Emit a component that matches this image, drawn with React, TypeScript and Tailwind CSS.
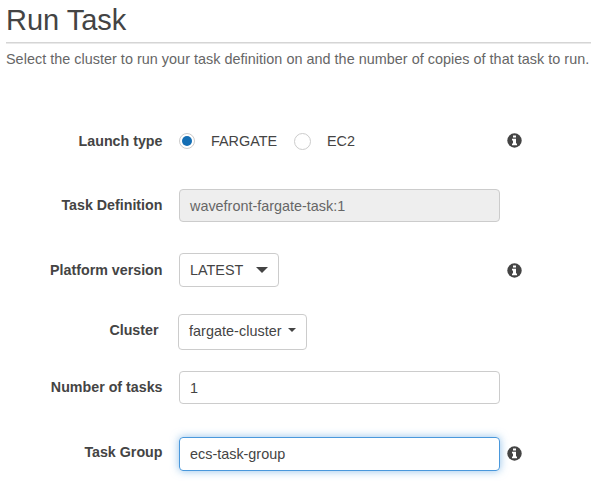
import type { ReactNode } from "react";

type RowProps = { label: string; className: string; labelClass?: string; infoClass?: string; info?: boolean; children: ReactNode };

function InfoIcon({ className }: { className: string }) {
  return (
    <svg viewBox="0 0 15 15" className={`ml-[7px] size-[15px] ${className}`} aria-hidden="true">
      <circle cx="7.5" cy="7.5" r="7.2" fill="#444" />
      <path d="M6 2.4h3v2.2H6zM5 5.8h4v4.8h1v1.7H5v-1.7h1V7.4H5z" fill="#fff" />
    </svg>
  );
}

function Row({ label, className, labelClass = "", infoClass = "", info, children }: RowProps) {
  return (
    <div className={`flex items-center ${className}`}>
      <div className={`w-[162.5px] shrink-0 text-right text-[14.25px] leading-[18px] font-bold whitespace-nowrap ${labelClass}`}>
        {label}
      </div>
      <div className="ml-[16.5px] flex h-full w-[321px] items-center">{children}</div>
      {info && <InfoIcon className={infoClass} />}
    </div>
  );
}

function Radio({ checked }: { checked?: boolean }) {
  return (
    <span className={`flex shrink-0 items-center justify-center rounded-full border border-[#ccc] bg-white ${checked ? "size-[16px]" : "size-[17px]"}`}>
      {checked && <span className="size-[10px] rounded-full bg-[#146eb4]" />}
    </span>
  );
}

const field = "flex h-full items-center rounded-[4px] border px-[10px] text-[14.4px] whitespace-nowrap";

export default function App() {
  return (
    <main className="h-[481px] w-[591px] overflow-hidden bg-white font-['Liberation_Sans',Arial,sans-serif] text-[#444]">
      <header className="pl-[6px]">
        <h1 className="h-[42px] pt-[3px] text-[29px] leading-[34px]">Run Task</h1>
        <div className="h-[2px] border-t border-[#d5d5d5] bg-[#e9e9e9]" />
        <p className="mt-[6px] text-[14.4px] leading-[18px] tracking-[0.026px] whitespace-nowrap text-[#666]">
          Select the cluster to run your task definition on and the number of copies of that task to run.
        </p>
      </header>
      <form className="pt-[64px]">
        <Row label="Launch type" className="h-[18px]" infoClass="mb-[2px]" info>
          <Radio checked />
          <span className="ml-[16px] w-[83px] pt-[1px] text-[14.4px]">FARGATE</span>
          <Radio />
          <span className="ml-[16px] pt-[1px] text-[14.4px]">EC2</span>
        </Row>
        <Row label="Task Definition" className="mt-[39px] h-[33px]" labelClass="pb-[2px]">
          <div className={`${field} w-full border-[#ccc] bg-[#eee] pt-[2px] text-[#666]`}>wavefront-fargate-task:1</div>
        </Row>
        <Row label="Platform version" className="mt-[31px] h-[34px]" info>
          <div className={`${field} w-[100px] justify-between border-[#ccc]`}>
            <span className="pt-[2px]">LATEST</span>
            <span className="border-x-[6px] border-t-[6px] border-x-transparent border-t-[#444]" />
          </div>
        </Row>
        <Row label="Cluster" className="mt-[27px] h-[36px]" labelClass="pr-[4px] pb-[4px]">
          <div className={`${field} -ml-px w-[129px] justify-between border-[#ccc]`}>
            <span className="tracking-[0.04px]">fargate-cluster</span>
            <span className="mb-[4px] border-x-[4px] border-t-[4px] border-x-transparent border-t-[#444]" />
          </div>
        </Row>
        <Row label="Number of tasks" className="mt-[21px] h-[33px]" labelClass="pb-[2px]">
          <div className={`${field} w-full border-[#ccc] pt-[2px]`}>1</div>
        </Row>
        <Row label="Task Group" className="mt-[33px] h-[34px]" labelClass="pb-[4px]" infoClass="mb-[2px]" info>
          <div className={`${field} w-full border-[#4a98dc] pt-[2px] shadow-[0_0_8px_rgba(74,152,220,0.6)]`}>ecs-task-group</div>
        </Row>
      </form>
    </main>
  );
}
